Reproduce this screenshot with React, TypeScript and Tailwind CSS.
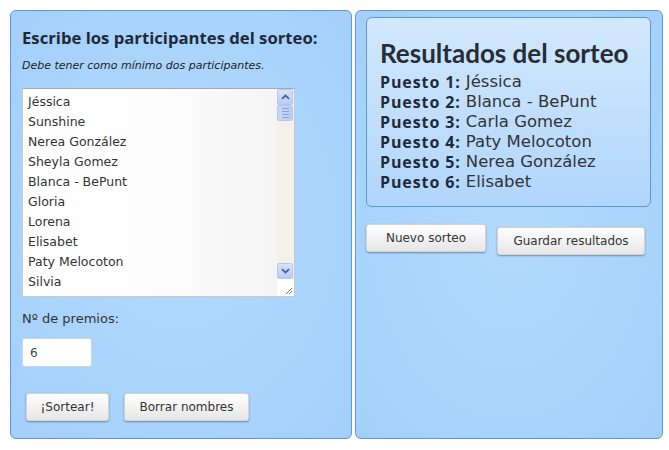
import React from "react";

const participantes = [
  "Jéssica",
  "Sunshine",
  "Nerea González",
  "Sheyla Gomez",
  "Blanca - BePunt",
  "Gloria",
  "Lorena",
  "Elisabet",
  "Paty Melocoton",
  "Silvia",
];

const resultados = [
  "Jéssica",
  "Blanca - BePunt",
  "Carla Gomez",
  "Paty Melocoton",
  "Nerea González",
  "Elisabet",
];

const body = { fontFamily: '"DejaVu Sans", Verdana, sans-serif' };
const head = { fontFamily: '"Open Sans", Lato, sans-serif' };
const title = { fontFamily: 'Lato, "Open Sans", sans-serif' };

const Boton: React.FC<{ label: string; className?: string }> = ({ label, className }) => (
  <button
    className={
      "h-[28px] rounded-[3px] border border-[#d4d4d4] bg-gradient-to-b from-white to-[#e6e6e6] text-[12px] text-[#333] shadow-[0_1px_2px_rgba(0,0,0,0.35)] " +
      (className || "")
    }
    style={body}
  >
    {label}
  </button>
);

const ScrollBtn: React.FC<{ down?: boolean }> = ({ down }) => (
  <div className="w-[16px] h-[16px] rounded-[2px] border border-[#b6c8f0] bg-gradient-to-b from-[#d6e2fd] to-[#b9ccf8] flex items-center justify-center">
    <svg width="9" height="6" viewBox="0 0 9 6">
      <path
        d={down ? "M1 1.2 L4.5 4.6 L8 1.2" : "M1 4.8 L4.5 1.4 L8 4.8"}
        fill="none"
        stroke="#4b5f88"
        strokeWidth="1.8"
      />
    </svg>
  </div>
);

const FakeTextarea: React.FC = () => (
  <div className="w-[273px] h-[209px] border border-[#c9c9c9] border-t-[#a9a9a9] bg-white flex">
    <div className="flex-1 overflow-hidden bg-gradient-to-r from-white via-[#fdfdfd] to-[#f4f4f4] px-[5px] pt-[3px]">
      {participantes.map((p) => (
        <div key={p} className="h-[20px] leading-[20px] text-[12.5px] text-[#333]" style={body}>
          {p}
        </div>
      ))}
    </div>
    <div className="w-[17px] flex flex-col bg-[#f3f1ea]">
      <ScrollBtn />
      <div className="w-[16px] h-[16px] rounded-[2px] border border-[#b6c8f0] bg-gradient-to-r from-[#c7d6fb] to-[#b9ccf8] flex flex-col items-center justify-center gap-[2px]">
        <div className="w-[7px] h-px bg-[#8ea3d6]" />
        <div className="w-[7px] h-px bg-[#8ea3d6]" />
        <div className="w-[7px] h-px bg-[#8ea3d6]" />
        <div className="w-[7px] h-px bg-[#8ea3d6]" />
      </div>
      <div className="flex-1" />
      <ScrollBtn down />
      <div className="h-[17px] bg-white flex items-end justify-end pr-[1px] pb-[1px]">
        <svg width="10" height="10" viewBox="0 0 10 10">
          <path d="M9 3 L3 9 M9 6 L6 9" stroke="#777" strokeWidth="1" />
        </svg>
      </div>
    </div>
  </div>
);

export default function App() {
  return (
    <div className="w-[669px] h-[450px] bg-white pt-[10px] pl-[10px] flex gap-[3px]">
      <div className="w-[342px] h-[429px] rounded-[6px] border border-[#6399c6] bg-[radial-gradient(ellipse_at_center,#b2dafd_0%,#a9d4fc_60%,#a3cffa_100%)] pl-[11px] pt-[16px] flex flex-col">
        <h2 className="text-[16.7px] leading-[22px] font-bold text-[#1f2a38] whitespace-nowrap" style={head}>
          Escribe los participantes del sorteo:
        </h2>
        <p className="mt-[10px] text-[11px] leading-[14px] italic text-[#222]" style={body}>
          Debe tener como mínimo dos participantes.
        </p>
        <div className="mt-[15px]">
          <FakeTextarea />
        </div>
        <div className="mt-[12px] text-[13px] leading-[20px] text-[#333]" style={body}>
          Nº de premios:
        </div>
        <div className="mt-[9px] w-[70px] h-[29px] rounded-[3px] border border-[#c4d9ec] bg-white flex items-center pl-[7px] text-[12px] text-[#444]" style={body}>
          6
        </div>
        <div className="mt-[26px] flex gap-[15px] pl-[4px]">
          <Boton label="¡Sortear!" className="w-[83px]" />
          <Boton label="Borrar nombres" className="w-[125px]" />
        </div>
      </div>

      <div className="w-[308px] h-[429px] rounded-[6px] border border-[#6399c6] bg-[radial-gradient(ellipse_at_center,#b2dafd_0%,#a9d4fc_60%,#a3cffa_100%)] pl-[10px] pt-[6px] flex flex-col">
        <div className="w-[285px] h-[190px] rounded-[6px] border border-[#5e9acb] bg-gradient-to-b from-[#d2e8fd] to-[#b0d6fb] pl-[13px] pt-[20px]">
          <h1 className="text-[26px] leading-[30px] font-bold text-[#272d36] whitespace-nowrap" style={title}>
            Resultados del sorteo
          </h1>
          <div className="mt-[4px]">
            {resultados.map((r, i) => (
              <div key={i} className="flex items-center h-[20px] whitespace-nowrap gap-[5px]">
                <span className="inline-block h-[20px] leading-[20px] font-bold text-[16px] tracking-[0.9px] text-[#1f2a38]" style={head}>
                  Puesto {i + 1}:
                </span>
                <span className="inline-block h-[20px] leading-[20px] text-[16.5px] text-[#333]" style={body}>
                  {r}
                </span>
              </div>
            ))}
          </div>
        </div>
        <div className="mt-[17px] flex items-start gap-[11px]">
          <Boton label="Nuevo sorteo" className="w-[120px]" />
          <Boton label="Guardar resultados" className="w-[148px] mt-[3px]" />
        </div>
      </div>
    </div>
  );
}
